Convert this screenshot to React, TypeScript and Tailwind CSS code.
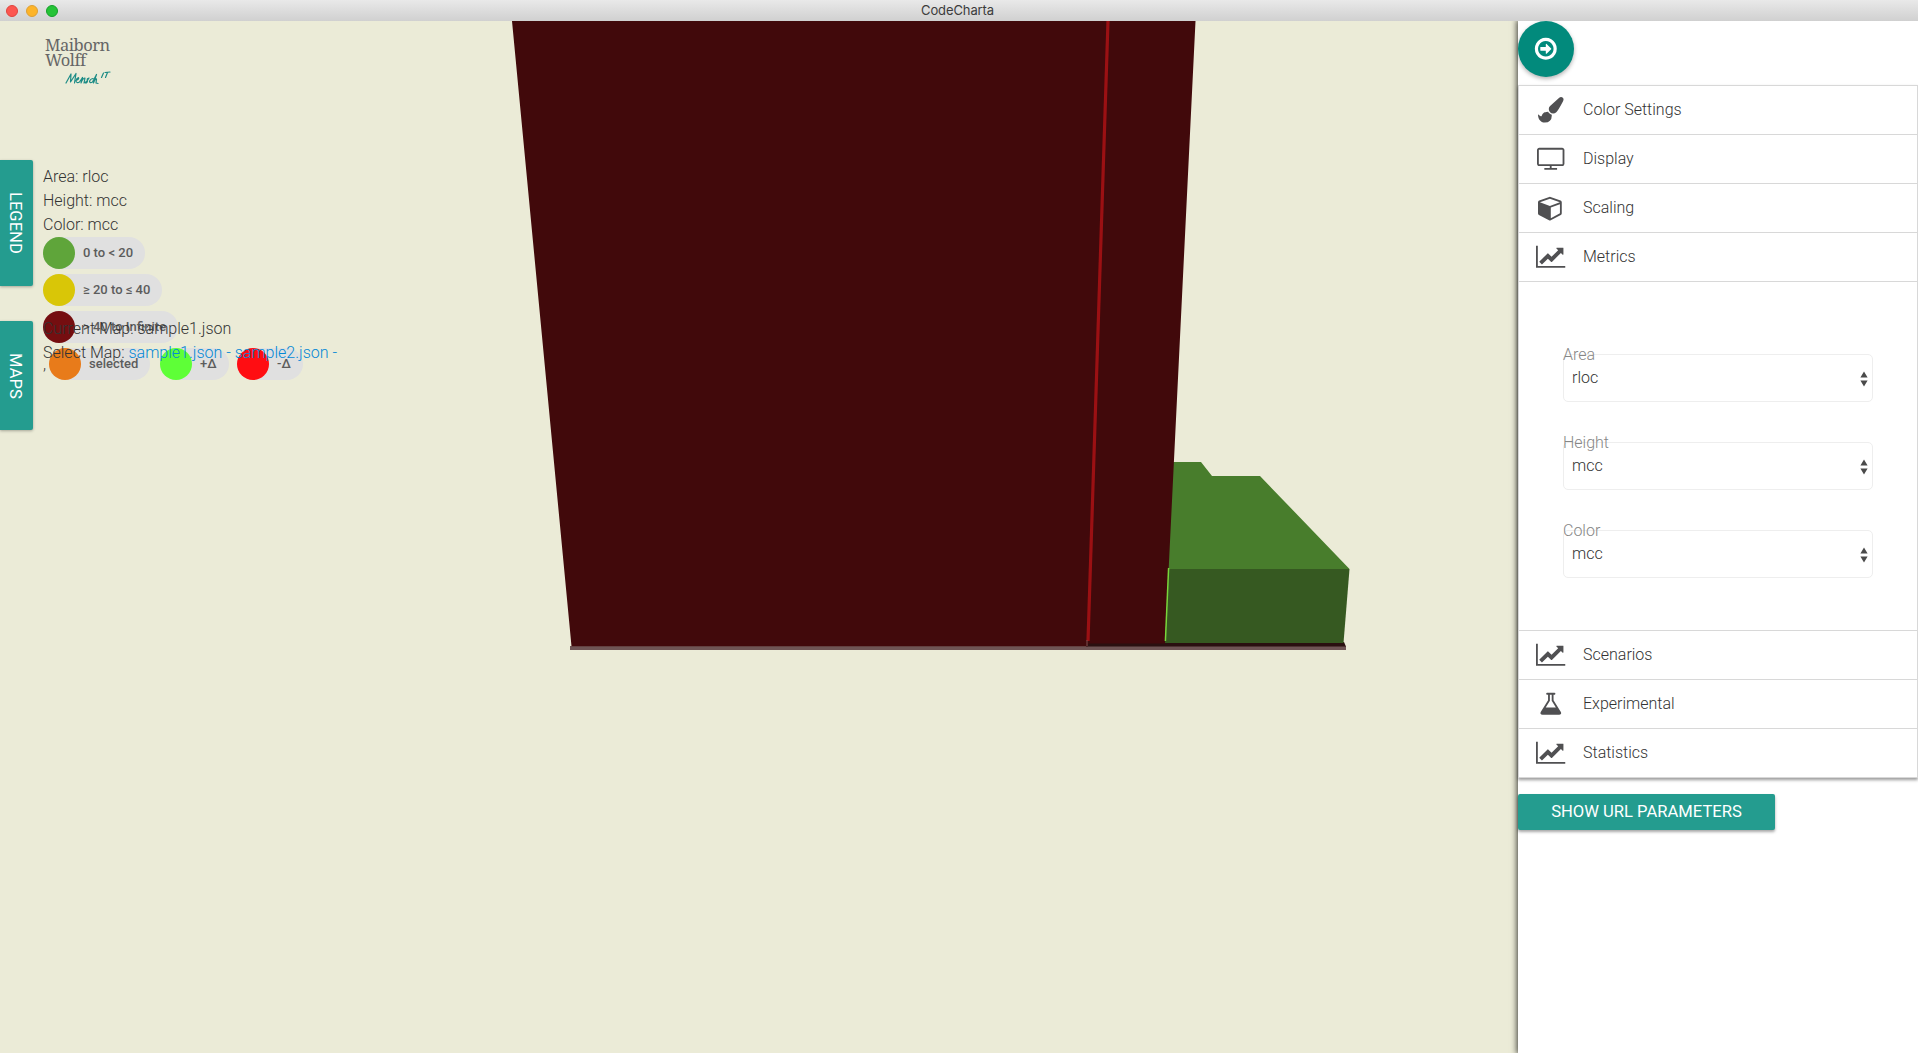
import type { ReactNode } from 'react';

type IconDef = { w: number; d: string };

const icons: Record<string, IconDef> = {
  brush: {
    w: 1792,
    d: 'M1615 0q70 0 122.5 46.5t52.5 116.5q0 63-45 151-332 629-465 752-97 91-218 91-126 0-216.5-92.5t-90.5-219.5q0-128 92-212l638-579q59-54 130-54zm-909 1034q39 76 106.5 130t150.5 76l1 71q4 213-129.5 347t-348.5 134q-123 0-218-46.5t-152.5-127.5-86.5-183-29-220q7 5 41 30t62 44.5 59 36.5 46 17q41 0 55-37 25-66 57.5-112.5t69.5-76 88-47.5 103-25.5 125-10.5z',
  },
  screen: {
    w: 1920,
    d: 'M1792 1248v-960q0-13-9.5-22.5t-22.5-9.5h-1600q-13 0-22.5 9.5t-9.5 22.5v960q0 13 9.5 22.5t22.5 9.5h1600q13 0 22.5-9.5t9.5-22.5zm128-960v960q0 66-47 113t-113 47h-736v128h352q14 0 23 9t9 23v64q0 14-9 23t-23 9h-832q-14 0-23-9t-9-23v-64q0-14 9-23t23-9h352v-128h-736q-66 0-113-47t-47-113v-960q0-66 47-113t113-47h1600q66 0 113 47t47 113z',
  },
  cube: {
    w: 1792,
    d: 'M896 1629l640-349v-636l-640 233v752zm-64-865l698-254-698-254-698 254zm832-252v768q0 35-18 65t-49 47l-704 384q-28 16-61 16t-61-16l-704-384q-31-17-49-47t-18-65v-768q0-40 23-73t61-47l704-256q22-8 44-8t44 8l704 256q38 14 61 47t23 73z',
  },
  chart: {
    w: 2048,
    d: 'M2048 1536v128h-2048v-1536h128v1408h1920zm-128-1248v435q0 21-19.5 29.5t-35.5-7.5l-121-121-633 633q-10 10-23 10t-23-10l-233-233-416 416-192-192 585-585q10-10 23-10t23 10l233 233 464-464-121-121q-16-16-7.5-35.5t29.5-19.5h435q14 0 23 9t9 23z',
  },
  flask: {
    w: 1792,
    d: 'M1591 1448q56 89 21.5 152.5t-140.5 63.5h-1152q-106 0-140.5-63.5t21.5-152.5l503-793v-399h-64q-26 0-45-19t-19-45 19-45 45-19h512q26 0 45 19t19 45-19 45-45 19h-64v399zm-779-725l-272 429h712l-272-429-20-31v-436h-128v436z',
  },
  arrow: {
    w: 1792,
    d: 'M1280 896q0 14-9 23l-320 320q-9 9-23 9-13 0-22.5-9.5t-9.5-22.5v-192h-352q-13 0-22.5-9.5t-9.5-22.5v-192q0-13 9.5-22.5t22.5-9.5h352v-192q0-14 9-23t23-9q12 0 24 10l319 319q9 9 9 23zm160 0q0-148-73-273t-198-198-273-73-273 73-198 198-73 273 73 273 198 198 273 73 273-73 198-198 73-273zm224 0q0 209-103 385.5t-279.5 279.5-385.5 103-385.5-103-279.5-279.5-103-385.5 103-385.5 279.5-279.5 385.5-103 385.5 103 279.5 279.5 103 385.5z',
  },
};

function Icon({ name }: { name: string }) {
  const icon = icons[name];
  return (
    <svg viewBox={`0 0 ${icon.w} 1792`} className="h-[25.6px] w-auto shrink-0" fill="currentColor">
      <path d={icon.d} />
    </svg>
  );
}

function Section({ icon, label, children }: { icon: string; label: string; children?: ReactNode }) {
  return (
    <section>
      <div className="flex h-[49px] items-center border-b border-[#d8d8d8] pr-4">
        <span className="ml-[17px] flex w-[30px] justify-center text-[#505052]">
          <Icon name={icon} />
        </span>
        <span className="ml-[17px]">{label}</span>
      </div>
      {children}
    </section>
  );
}

function MetricSelect({ label, value }: { label: string; value: string }) {
  return (
    <div className="relative flex h-12 w-[310px] justify-between rounded-[5px] border border-[#eeeeee] pt-[11px] pr-1 pl-2">
      <span className="absolute -top-[12px] -left-px leading-6 text-[#868686]">{label}</span>
      <span className="leading-6">{value}</span>
      <svg viewBox="0 0 8 16" className="mt-[5px] h-4 w-2" fill="#4a4a4a">
        <path d="M4 0.5 7.600 6.500H0.400ZM4 15.500 7.600 9.500H0.400Z" />
      </svg>
    </div>
  );
}

function Chip({ dot, children }: { dot: string; children: string }) {
  return (
    <div className="flex h-8 w-fit items-center rounded-full bg-[#e0e0e0] pr-3 text-[13px] font-medium text-[#5c5c5c]">
      <span className={`mr-2 size-8 rounded-full ${dot}`} />
      {children}
    </div>
  );
}

function Logo() {
  return (
    <div className="absolute top-[17px] left-[45px] w-[70px] text-[#666666]">
      <div className="font-['Noto_Serif','Liberation_Serif',serif] text-[16.5px] leading-[14.5px] font-normal tracking-[-0.5px]">
        <div>Maiborn</div>
        <div>Wolff</div>
      </div>
      <svg
        viewBox="0 0 46 15"
        className="absolute top-[33px] left-[20px] h-[15px] w-[46px]"
        fill="none"
        stroke="#1d8c86"
        strokeWidth="1.2"
        strokeLinecap="round"
        strokeLinejoin="round"
      >
        <path d="M1 12 6 3 5.500 11 11 2.500 9.500 12M11 9.500Q14.500 8 13.500 6.500 11.500 7 11 10 11.500 12.500 14.500 11L17.500 6.500 16 12Q18 7 20 7L19 12Q22 11 24 7 21.500 7.500 22.500 9.500 22.500 12 20.500 12M28 7.500Q25 8 24.500 10.500 25 12.500 27.500 11L31.500 3.500 28.500 12Q30.500 7 31.500 8L31 12 33 12.500M36.500 6.500 38.500 2M40 1.500 45 1M42.500 1.500 40.500 6.500" />
      </svg>
    </div>
  );
}

function CityMap() {
  return (
    <svg viewBox="0 21 1518 1032" className="block h-[1032px] w-[1518px]">
      <path d="M570 646H1346V650H570Z" fill="#6f5555" />
      <path d="M1086 642H1344L1346 646.500H1086Z" fill="#2a1010" />
      <path d="M1170 462H1201L1212 476H1260L1349.500 569H1165Z" fill="#487d2c" />
      <path d="M1166 569H1349.500L1343.500 643H1163Z" fill="#365921" />
      <path d="M512 21H1195.500L1165 643.500H1088V646.300H571.500Z" fill="#41090b" />
      <path d="M1108 21 1088 641" stroke="#9b1013" strokeWidth="3.2" />
      <path d="M1168.600 568 1165.400 641" stroke="#78d63b" strokeWidth="1.500" />
      <path d="M1087 640V646" stroke="#7a5050" strokeWidth="1" />
    </svg>
  );
}

function SideTab({ className, children }: { className: string; children: string }) {
  return (
    <button
      className={`absolute left-0 flex w-[33px] items-center justify-center rounded-r-[2px] bg-[#249c8f] pr-[3px] text-[16.6px] font-normal text-white shadow-[0_1px_3px_rgba(0,0,0,0.3)] [writing-mode:vertical-rl] ${className}`}
    >
      {children}
    </button>
  );
}

export default function App() {
  return (
    <div className="flex h-[1053px] w-[1918px] flex-col overflow-hidden bg-[#ebebd7] font-['Roboto',sans-serif] text-[16px] font-light text-[#333333]">
      <header className="flex h-[21px] shrink-0 items-center bg-linear-to-b from-[#e9e9e9] to-[#d0d0d0] px-[6px]">
        <div className="flex w-40 gap-2">
          <span className="size-3 rounded-full border border-[#e0443e] bg-[#fc5650]" />
          <span className="size-3 rounded-full border border-[#dea034] bg-[#fdb429]" />
          <span className="size-3 rounded-full border border-[#14a029] bg-[#25c337]" />
        </div>
        <h1 className="flex-1 pr-[163px] text-center font-['Inter',sans-serif] text-[13px] font-normal tracking-[-0.1px] text-[#3c3c3c]">CodeCharta</h1>
      </header>

      <div className="flex min-h-0 flex-1">
        <main className="relative w-[1518px] shrink-0">
          <CityMap />
          <Logo />

          <SideTab className="top-[139px] h-[126px]">LEGEND</SideTab>
          <div className="absolute top-[144px] left-[43px] leading-6">
            <p>Area: rloc</p>
            <p>Height: mcc</p>
            <p>Color: mcc</p>
            <div className="flex flex-col gap-[5px]">
              <Chip dot="bg-[#5fa53a]">0 to &lt; 20</Chip>
              <Chip dot="bg-[#d9c607]">≥ 20 to ≤ 40</Chip>
              <Chip dot="bg-[#750e10]">&gt; 40 to Infinite</Chip>
              <div className="flex">
                <span className="w-[6px] pt-[5px]">,</span>
                <div className="flex gap-[9px]">
                  <div className="w-[102px]">
                    <Chip dot="bg-[#e87b1a]">selected</Chip>
                  </div>
                  <div className="w-[68px]">
                    <Chip dot="bg-[#5eff37]">+Δ</Chip>
                  </div>
                  <Chip dot="bg-[#ff0d12]">-Δ</Chip>
                </div>
              </div>
            </div>
          </div>

          <SideTab className="top-[300px] h-[109px]">MAPS</SideTab>
          <div className="absolute top-[296px] left-[43px] leading-6 whitespace-nowrap">
            <p>Current Map: sample1.json</p>
            <p>
              Select Map: <a className="text-[#0388d6]">sample1.json - </a>
              <a className="text-[#0388d6]">sample2.json -</a>
            </p>
          </div>
        </main>

        <aside className="z-10 w-[400px] shrink-0 bg-white shadow-[0_0_6px_1px_rgba(0,0,0,0.75)] [clip-path:inset(0_0_0_-12px)]">
          <button className="flex size-14 items-center justify-center rounded-full bg-[#028a7c] text-white shadow-[0_2px_4px_rgba(0,0,0,0.3)]">
            <Icon name="arrow" />
          </button>

          <div className="mt-2 border border-b-0 border-[#d8d8d8] shadow-[0_2px_3px_rgba(0,0,0,0.4)]">
            <Section icon="brush" label="Color Settings" />
            <Section icon="screen" label="Display" />
            <Section icon="cube" label="Scaling" />
            <Section icon="chart" label="Metrics">
              <div className="flex h-[349px] flex-col gap-10 border-b border-[#d8d8d8] pt-[72px] pl-11">
                <MetricSelect label="Area" value="rloc" />
                <MetricSelect label="Height" value="mcc" />
                <MetricSelect label="Color" value="mcc" />
              </div>
            </Section>
            <Section icon="chart" label="Scenarios" />
            <Section icon="flask" label="Experimental" />
            <Section icon="chart" label="Statistics" />
          </div>

          <button className="mt-4 flex h-9 w-[257px] items-center justify-center rounded-[2px] bg-[#249c8f] text-[16.6px] font-normal text-white shadow-[0_2px_3px_rgba(0,0,0,0.35)]">
            SHOW URL PARAMETERS
          </button>
        </aside>
      </div>
    </div>
  );
}
